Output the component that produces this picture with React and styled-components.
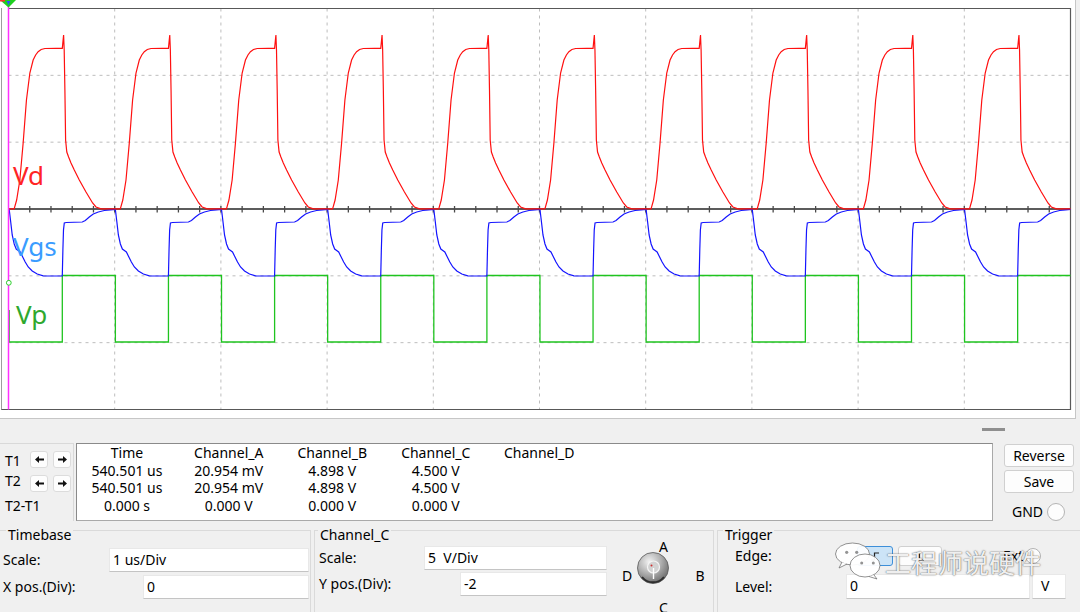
import React from "react";
import styled, { createGlobalStyle } from "styled-components";

const GlobalStyle = createGlobalStyle`
  html, body { margin: 0; padding: 0; background: #f0f0f0; }
  body {
    width: 1080px;
    height: 612px;
    overflow: hidden;
    font-family: "Noto Sans", "Liberation Sans", sans-serif;
    font-size: 14px;
    color: #000;
  }
  * { box-sizing: border-box; }
`;

// ---- scope geometry (page pixels) ----
const LEFT = 8.5;
const RIGHT = 1070.5;
const TOP = 8.5;
const BOTTOM = 409.5;
const DIV_X = (RIGHT - LEFT) / 10;
const DIV_Y = (BOTTOM - TOP) / 6;
const AXIS_Y = TOP + DIV_Y * 3;
const RISE0 = 62.3;
const PERIOD = 106.15;
const HALF = 53.07;

const GATE_FALL = [[0,209.5],[1.5,222],[3,235],[5,244],[7,249],[9,250.5],[11,252],[13,256],[16,262],[19,267],[23,271],[28,274],[34,275.8],[40,276]];
const GATE_RISE = [[0,276],[0.6,250],[1.2,230],[2,223],[4,222.5],[20,222],[23,220.5],[27,217],[31,214],[36,212],[42,210.5],[48,209.8],[53,209.5]];
const DRAIN = [[0,48.3],[1.3,35],[1.9,50],[2.6,90],[3.3,140],[4.5,152],[6.3,157],[8.7,163],[12,170],[17,180],[23.7,192],[30.3,203],[33.7,207],[38.7,208.8],[58,208.8],[60.5,200],[63.7,180],[67,143],[70.3,100],[73.7,73],[77,60],[79.5,55],[82,51.7],[85,49.5],[88.7,48.5],[100,48.3]];

const lerpAt = (a, b, x) => [x, a[1] + ((b[1] - a[1]) * (x - a[0])) / (b[0] - a[0])];

function clip(pts, x0, x1) {
  const out = [];
  for (let i = 0; i < pts.length; i++) {
    const p = pts[i];
    const q = pts[i - 1];
    if (p[0] < x0) continue;
    if (q && q[0] < x0 && out.length === 0) out.push(lerpAt(q, p, x0));
    if (p[0] > x1) {
      if (q && q[0] <= x1) out.push(lerpAt(q, p, x1));
      break;
    }
    out.push(p);
  }
  return out;
}

const toPath = (pts) =>
  pts.map((p, i) => `${i ? "L" : "M"}${p[0].toFixed(2)} ${p[1].toFixed(2)}`).join(" ");

const cycles = Array.from({ length: 11 }, (_, i) => i - 1);

function pulsePath() {
  const pts = [[9.2, 310], [9.2, 342]];
  cycles.filter((k) => k >= 0).forEach((k) => {
    const r = RISE0 + PERIOD * k;
    const f = r + HALF;
    pts.push([r, 342], [r, 275.5], [f, 275.5], [f, 342]);
  });
  return toPath(clip(pts, LEFT, RIGHT));
}

function gatePath() {
  const pts = [[LEFT, 209.5]];
  cycles.forEach((k) => {
    const f = RISE0 + HALF + PERIOD * k;
    GATE_FALL.forEach(([dx, y]) => pts.push([f + dx, y]));
    GATE_RISE.forEach(([dx, y]) => pts.push([f + HALF + dx, y]));
  });
  return toPath(clip(pts, LEFT, RIGHT));
}

function drainPath() {
  const pts = [];
  cycles.forEach((k) => {
    const r = RISE0 + PERIOD * k;
    DRAIN.forEach(([dx, y]) => pts.push([r + dx, y]));
  });
  pts.push([RIGHT + 5, 208.8]);
  return toPath(clip(pts, LEFT, RIGHT));
}

// ---- layout ----
const Screen = styled.div`
  position: relative;
  width: 1080px;
  height: 612px;
  display: flex;
  flex-direction: column;
  overflow: hidden;
`;

const ScopePanel = styled.div`
  flex: none;
  width: 1076px;
  height: 419px;
  background: #fff;
  border-right: 1px solid #c6c6c6;
  border-bottom: 1px solid #c6c6c6;
`;

const ScopeSvg = styled.svg`
  display: block;
`;

const TraceLabel = styled.text`
  font-family: "Noto Sans", sans-serif;
  font-size: 26px;
  fill: ${(p) => p.$color};
`;

const ToolStrip = styled.div`
  flex: none;
  height: 24px;
  display: flex;
  justify-content: flex-end;
`;

const Grip = styled.div`
  width: 23px;
  height: 3px;
  margin: 9px 75px 0 0;
  background: #8f8f8f;
`;

const MeasureRow = styled.div`
  flex: none;
  height: 78px;
  display: flex;
`;

const CursorPanel = styled.div`
  width: 74px;
  display: flex;
  border-top: 1px solid #d9d9d9;
  border-right: 1px solid #d9d9d9;
  padding: 7px 0 0 5px;
`;

const CursorLabels = styled.div`
  width: 25px;
  display: flex;
  flex-direction: column;
`;

const CursorLabel = styled.div`
  line-height: 20px;
  white-space: nowrap;
  margin-top: ${(p) => p.$mt || 0}px;
`;

const ArrowGrid = styled.div`
  display: grid;
  grid-template-columns: 18px 18px;
  grid-auto-rows: 17px;
  column-gap: 5px;
  row-gap: 7px;
  align-content: start;
`;

const ArrowButton = styled.button`
  padding: 0;
  margin: 0;
  background: #fdfdfd;
  border: 1px solid #dcdcdc;
  border-radius: 3px;
  display: flex;
  align-items: center;
  justify-content: center;
`;

const MeasureTable = styled.div`
  margin-left: 2px;
  width: 917px;
  background: #fff;
  border: 1px solid #a9a9a9;
  border-top-color: #8a8a8a;
  border-left-color: #8a8a8a;
  display: grid;
  grid-template-columns: 100px repeat(4, 103.5px);
  grid-auto-rows: 17.5px;
  align-content: start;
`;

const Cell = styled.div`
  text-align: center;
  line-height: 17.5px;
  white-space: nowrap;
`;

const SidePanel = styled.div`
  flex: 1;
  display: flex;
  flex-direction: column;
  gap: 3px;
  padding: 1px 0 0 11px;
`;

const PushButton = styled.button`
  width: 70px;
  height: 23px;
  padding: 0;
  font: inherit;
  color: #000;
  background: #fdfdfd;
  border: 1px solid #d0d0d0;
  border-radius: 3px;
  line-height: 21px;
`;

const GndRow = styled.div`
  display: flex;
  align-items: center;
  gap: 4px;
  height: 20px;
  margin-top: 6px;
  padding-left: 8px;
`;

const Radio = styled.span`
  display: inline-block;
  width: ${(p) => p.$size}px;
  height: ${(p) => p.$size}px;
  border-radius: 50%;
  border: 1px solid #b4b4b4;
  background: #fdfdfd;
  margin-left: ${(p) => p.$ml || 0}px;
`;

const GroupRow = styled.div`
  flex: none;
  height: 92px;
  margin-top: -1px;
  display: flex;
`;

const Group = styled.fieldset`
  flex: none;
  min-width: 0;
  width: ${(p) => p.$w}px;
  height: 100%;
  margin: 0 0 0 ${(p) => p.$ml}px;
  padding: ${(p) => p.$pt}px 1px 0 ${(p) => p.$pl}px;
  border: 1px solid #dadada;
  border-bottom: none;
`;

const GroupTitle = styled.legend`
  margin-left: ${(p) => p.$ml}px;
  padding: 9px 2px 0;
  line-height: 12px;
  font-size: 14px;
`;

const GroupBody = styled.div`
  display: flex;
  flex-direction: ${(p) => (p.$row ? "row" : "column")};
  gap: ${(p) => p.$gap || 0}px;
  padding-left: ${(p) => p.$pl || 0}px;
`;

const FormColumn = styled.div`
  width: ${(p) => p.$w}px;
  display: flex;
  flex-direction: column;
  gap: ${(p) => p.$gap}px;
`;

const FormRow = styled.div`
  display: flex;
  align-items: center;
  justify-content: ${(p) => (p.$start ? "flex-start" : "space-between")};
  height: ${(p) => p.$h}px;
`;

const FormLabel = styled.span`
  width: ${(p) => (p.$w ? `${p.$w}px` : "auto")};
  white-space: nowrap;
  line-height: 20px;
`;

const Field = styled.div`
  width: ${(p) => p.$w}px;
  height: 100%;
  margin-left: ${(p) => p.$ml || 0}px;
  padding-left: ${(p) => p.$pad || 3}px;
  background: #fff;
  border: 1px solid #e8e8e8;
  border-bottom-color: #c4c4c4;
  line-height: 22px;
  white-space: pre;
`;

const EdgeButton = styled.button`
  width: ${(p) => p.$w}px;
  height: 20px;
  padding: 0;
  margin-left: ${(p) => p.$ml || 0}px;
  display: flex;
  align-items: center;
  justify-content: center;
  border-radius: 3px;
  background: ${(p) => (p.$active ? "#cce4f7" : "#fdfdfd")};
  border: 1px solid ${(p) => (p.$active ? "#3d8fd9" : "#d0d0d0")};
`;

const ExtLabel = styled.span`
  margin-left: ${(p) => p.$ml}px;
  line-height: 20px;
`;

const DialSvg = styled.svg`
  display: block;
  flex: none;
  margin-top: -6px;
  overflow: visible;
`;

const DialLetter = styled.text`
  font-family: "Noto Sans", sans-serif;
  font-size: 14px;
  fill: #000;
  text-anchor: middle;
`;

const Watermark = styled.div`
  position: absolute;
  left: 833px;
  top: 538px;
  display: flex;
  align-items: center;
  pointer-events: none;
`;

const WatermarkText = styled.span`
  margin-left: 2px;
  margin-top: 6px;
  font-family: "Noto Sans CJK SC", "Noto Sans", sans-serif;
  font-size: 26px;
  line-height: 30px;
  color: rgba(255, 255, 255, 0.93);
  text-shadow: 0 0 1px rgba(70, 70, 70, 0.9), 0 0 2px rgba(70, 70, 70, 0.55);
  white-space: nowrap;
`;

function Arrow({ dir }) {
  const d = dir === "left"
    ? "M0 3.5 L4 0 L4 2.5 L9 2.5 L9 4.5 L4 4.5 L4 7 Z"
    : "M9 3.5 L5 0 L5 2.5 L0 2.5 L0 4.5 L5 4.5 L5 7 Z";
  return (
    <svg width="9" height="7" viewBox="0 0 9 7">
      <path d={d} fill="#111" />
    </svg>
  );
}

function EdgeIcon({ rising }) {
  return (
    <svg width="8" height="9" viewBox="0 0 8 9">
      <polyline
        points={rising ? "0,8 3.5,8 3.5,1 8,1" : "0,1 3.5,1 3.5,8 8,8"}
        fill="none"
        stroke="#222"
        strokeWidth="1.2"
      />
    </svg>
  );
}

function Scope() {
  const vLines = Array.from({ length: 9 }, (_, i) => LEFT + DIV_X * (i + 1));
  const hLines = [1, 2, 4, 5].map((j) => TOP + DIV_Y * j);
  const ticks = Array.from({ length: 49 }, (_, i) => LEFT + (DIV_X / 5) * (i + 1));
  return (
    <ScopeSvg width="1075" height="418" viewBox="0 0 1075 418">
      <line x1="1.5" y1="8" x2="1.5" y2="410" stroke="#9c9c9c" />
      {vLines.map((x) => (
        <line key={`v${x}`} x1={x} y1={TOP} x2={x} y2={BOTTOM} stroke="#bdbdbd" strokeDasharray="3 4" />
      ))}
      {hLines.map((y) => (
        <line key={`h${y}`} x1={LEFT} y1={y} x2={RIGHT} y2={y} stroke="#bdbdbd" strokeDasharray="3 4" />
      ))}
      <path d={`M8 ${TOP} H${RIGHT} V${BOTTOM} H1.5`} fill="none" stroke="#585858" strokeWidth="1.2" />
      <line x1={LEFT} y1={AXIS_Y} x2={RIGHT} y2={AXIS_Y} stroke="#5c5c5c" strokeWidth="2" />
      {ticks.map((x) => (
        <line key={`t${x}`} x1={x} y1={AXIS_Y - 3} x2={x} y2={AXIS_Y + 3.5} stroke="#4a4a4a" strokeWidth="1.3" />
      ))}
      <path d={pulsePath()} fill="none" stroke="#1fc41f" strokeWidth="1.3" />
      <path d={gatePath()} fill="none" stroke="#1414ff" strokeWidth="1.2" />
      <path d={drainPath()} fill="none" stroke="#ff1010" strokeWidth="1.2" />
      <line x1="8.5" y1="4" x2="8.5" y2={BOTTOM} stroke="#ff30ff" strokeWidth="1.5" />
      <polygon points="0,0 16,0 8.5,7.5" fill="#1ed01e" />
      <rect x="0" y="0" width="5" height="1.5" fill="#ff3030" />
      <polygon points="6.5,1 10.5,1 8.5,5" fill="#3050ff" />
      <circle cx="8.8" cy="282.8" r="2.4" fill="#fff" stroke="#2ccf2c" strokeWidth="1" />
      <TraceLabel x="13" y="185" $color="#ff2424">Vd</TraceLabel>
      <TraceLabel x="13" y="256" $color="#3a9cff">Vgs</TraceLabel>
      <TraceLabel x="16" y="324" $color="#2ea82e">Vp</TraceLabel>
    </ScopeSvg>
  );
}

function Dial() {
  return (
    <DialSvg width="105" height="72" viewBox="0 0 105 72">
      <defs>
        <radialGradient id="knobFace" cx="0.38" cy="0.3" r="0.8">
          <stop offset="0" stopColor="#f2f2f2" />
          <stop offset="0.45" stopColor="#b4b4b4" />
          <stop offset="1" stopColor="#5e5e5e" />
        </radialGradient>
      </defs>
      <DialLetter x="56.5" y="12">A</DialLetter>
      <DialLetter x="20" y="41">D</DialLetter>
      <DialLetter x="93" y="41">B</DialLetter>
      <DialLetter x="56.5" y="73">C</DialLetter>
      <circle cx="46" cy="28" r="15.5" fill="url(#knobFace)" stroke="#5a5a5a" strokeWidth="0.8" />
      <circle cx="46.5" cy="27" r="6" fill="#d2d2d2" stroke="#f4f4f4" strokeWidth="1.2" />
      <path d="M35 37 A14 14 0 0 0 57 37" fill="none" stroke="#2e2e2e" strokeWidth="2" />
      <line x1="46.5" y1="28" x2="46.5" y2="39" stroke="#fff" strokeWidth="1.4" />
      <circle cx="44.5" cy="25.5" r="1" fill="#d03030" />
    </DialSvg>
  );
}

const rows = [
  ["Time", "Channel_A", "Channel_B", "Channel_C", "Channel_D"],
  ["540.501 us", "20.954 mV", "4.898 V", "4.500 V", ""],
  ["540.501 us", "20.954 mV", "4.898 V", "4.500 V", ""],
  ["0.000 s", "0.000 V", "0.000 V", "0.000 V", ""],
];

export default function App() {
  return (
    <Screen>
      <GlobalStyle />
      <ScopePanel>
        <Scope />
      </ScopePanel>

      <ToolStrip>
        <Grip />
      </ToolStrip>

      <MeasureRow>
        <CursorPanel>
          <CursorLabels>
            <CursorLabel>T1</CursorLabel>
            <CursorLabel>T2</CursorLabel>
            <CursorLabel $mt={5}>T2-T1</CursorLabel>
          </CursorLabels>
          <ArrowGrid>
            <ArrowButton><Arrow dir="left" /></ArrowButton>
            <ArrowButton><Arrow dir="right" /></ArrowButton>
            <ArrowButton><Arrow dir="left" /></ArrowButton>
            <ArrowButton><Arrow dir="right" /></ArrowButton>
          </ArrowGrid>
        </CursorPanel>
        <MeasureTable>
          {rows.flatMap((row, r) => row.map((text, c) => <Cell key={`${r}-${c}`}>{text}</Cell>))}
        </MeasureTable>
        <SidePanel>
          <PushButton>Reverse</PushButton>
          <PushButton>Save</PushButton>
          <GndRow>
            <span>GND</span>
            <Radio $size={18} />
          </GndRow>
        </SidePanel>
      </MeasureRow>

      <GroupRow>
        <Group $w={312} $ml={-1} $pl={3} $pt={7}>
          <GroupTitle $ml={3}>Timebase</GroupTitle>
          <GroupBody $gap={3}>
            <FormRow $h={24}>
              <FormLabel>Scale:</FormLabel>
              <Field $w={200}>1 us/Div</Field>
            </FormRow>
            <FormRow $h={24}>
              <FormLabel>X pos.(Div):</FormLabel>
              <Field $w={166}>0</Field>
            </FormRow>
          </GroupBody>
        </Group>

        <Group $w={400} $ml={3} $pl={4} $pt={5}>
          <GroupTitle $ml={-1}>Channel_C</GroupTitle>
          <GroupBody $row>
            <FormColumn $w={288} $gap={2}>
              <FormRow $h={24}>
                <FormLabel>Scale:</FormLabel>
                <Field $w={183}>{"5  V/Div"}</Field>
              </FormRow>
              <FormRow $h={24}>
                <FormLabel>Y pos.(Div):</FormLabel>
                <Field $w={147}>-2</Field>
              </FormRow>
            </FormColumn>
            <Dial />
          </GroupBody>
        </Group>

        <Group $w={380} $ml={3} $pl={6} $pt={5}>
          <GroupTitle $ml={-1}>Trigger</GroupTitle>
          <GroupBody $gap={8} $pl={11}>
            <FormRow $h={20} $start>
              <FormLabel $w={111}>Edge:</FormLabel>
              <EdgeButton $w={36} $ml={11} $active><EdgeIcon rising /></EdgeButton>
              <EdgeButton $w={44} $ml={5}><EdgeIcon /></EdgeButton>
              <ExtLabel $ml={61}>Ext</ExtLabel>
              <Radio $size={16} $ml={2} />
            </FormRow>
            <FormRow $h={25} $start>
              <FormLabel $w={111}>Level:</FormLabel>
              <Field $w={184}>0</Field>
              <Field $w={34} $ml={2} $pad={8}>V</Field>
            </FormRow>
          </GroupBody>
        </Group>
      </GroupRow>

      <Watermark>
        <svg width="50" height="42" viewBox="0 0 50 42">
          <ellipse cx="19.5" cy="16" rx="17" ry="11" fill="rgba(255,255,255,0.92)" stroke="rgba(110,110,110,0.75)" strokeWidth="1" />
          <path d="M9 24 L6 30 L14 26" fill="rgba(255,255,255,0.92)" stroke="rgba(110,110,110,0.75)" strokeWidth="1" />
          <circle cx="13.7" cy="14.3" r="1.6" fill="rgba(120,120,120,0.8)" />
          <circle cx="23.7" cy="14.3" r="1.6" fill="rgba(120,120,120,0.8)" />
          <ellipse cx="32" cy="27.5" rx="15" ry="11.5" fill="rgba(255,255,255,0.95)" stroke="rgba(110,110,110,0.75)" strokeWidth="1" />
          <path d="M41 37 L44 41 L36 38.5" fill="rgba(255,255,255,0.95)" stroke="rgba(110,110,110,0.75)" strokeWidth="1" />
          <circle cx="28.7" cy="25" r="1.5" fill="rgba(120,120,120,0.8)" />
          <circle cx="40.3" cy="25" r="1.5" fill="rgba(120,120,120,0.8)" />
        </svg>
        <WatermarkText>工程师说硬件</WatermarkText>
      </Watermark>
    </Screen>
  );
}
